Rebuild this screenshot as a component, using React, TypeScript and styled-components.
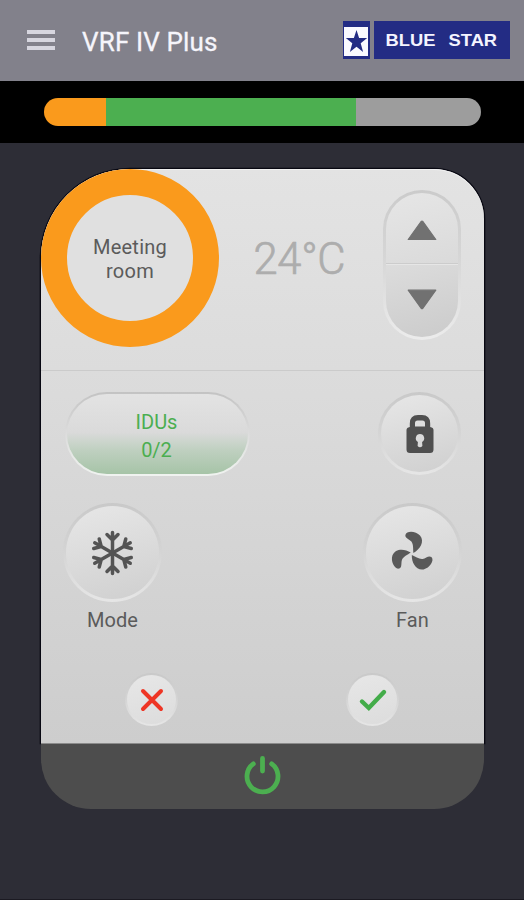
import React from "react";
import styled, { createGlobalStyle } from "styled-components";

const GlobalStyle = createGlobalStyle`
  * { box-sizing: border-box; }
  body { margin: 0; background: #2d2d36; font-family: Roboto, sans-serif; }
  button { font: inherit; color: inherit; border: 0; padding: 0; background: none; cursor: pointer; }
  svg { display: block; flex: none; overflow: visible; }
`;

const Screen = styled.main`
  width: 524px;
  height: 900px;
  overflow: hidden;
  background: #2d2d36;
  border-bottom: 1px solid #1b1a22;
`;

const Header = styled.header`
  height: 81px;
  display: flex;
  align-items: center;
  padding: 0 14.5px 0 27px;
  background: #82818b;
`;

const MenuButton = styled.button`
  width: 28px;
  height: 20px;
  display: flex;
  flex-direction: column;
  justify-content: space-between;
  margin-top: -1px;
`;

const MenuLine = styled.span`
  height: 3.6px;
  background: #d7d6df;
`;

const Title = styled.h1`
  margin: 2px auto 0 27px;
  font-size: 26px;
  line-height: 32px;
  font-weight: 400;
  letter-spacing: 0.15px;
  color: #f6f5fb;
  -webkit-text-stroke: 0.3px #f6f5fb;
`;

const Logo = styled.div`
  display: flex;
  gap: 4px;
  height: 37.5px;
  margin-top: -1.5px;
`;

const LogoMark = styled.div`
  width: 27px;
  padding: 6px 1.2px 2px;
  background: #232c84;
`;

const LogoField = styled.div`
  height: 29px;
  display: flex;
  align-items: center;
  justify-content: center;
  background: #fafaff;
`;

const LogoName = styled.div`
  width: 136px;
  display: flex;
  align-items: center;
  justify-content: center;
  gap: 18px;
  background: #232c84;
  color: #f4f4ff;
  font: bold 16.5px/37px "Liberation Sans", Arial, sans-serif;
  padding-top: 1.5px;
`;

const LogoWord = styled.span`
  transform: scaleX(1.11);
`;

const Strip = styled.div`
  height: 62px;
  padding: 16.5px 43.5px 0 44px;
  background: #000;
`;

const Meter = styled.div`
  height: 28px;
  display: flex;
  border-radius: 14px;
  overflow: hidden;
`;

const Segment = styled.div<{ $width: number; $color: string }>`
  flex: ${(p) => p.$width} 0 0;
  background: ${(p) => p.$color};
`;

const Remote = styled.section`
  width: 443px;
  margin: 26px 0 0 41px;
`;

const Panel = styled.div`
  height: 574px;
  border-radius: 89px 50px 0 0;
  background: linear-gradient(#e3e3e3 0%, #dcdcdc 35%, #cdcdcd 100%);
  box-shadow: 0 0 0 1.3px #080812, inset 0 1px 0 #f0f0f0;
`;

const RoomRow = styled.div`
  height: 202px;
  display: flex;
  align-items: flex-start;
  border-bottom: 1.5px solid #cbcbcb;
`;

const RoomDial = styled.div`
  width: 178px;
  height: 178px;
  display: flex;
  align-items: center;
  justify-content: center;
  padding-top: 2px;
  border: 26px solid #fa9a1c;
  border-radius: 50%;
  background: #e0e0e0;
  color: #5b5b5b;
  font-size: 20px;
  line-height: 24px;
  letter-spacing: 0.25px;
  text-align: center;
`;

const Temperature = styled.output`
  margin: 63px 0 0 34.5px;
  width: 94.5px;
  font-size: 43.5px;
  font-weight: 300;
  line-height: 56px;
  letter-spacing: -0.3px;
  -webkit-text-stroke: 0.7px #adadad;
  color: #adadad;
  white-space: nowrap;
`;

const Stepper = styled.div`
  width: 78px;
  height: 150px;
  margin: 21px 0 0 35px;
  padding: 3px;
  display: flex;
  flex-direction: column;
  border-radius: 39px;
  background: linear-gradient(#cbcbcb, #d6d6d6 45%, #ececec);
`;

const Step = styled.button<{ $down?: boolean }>`
  height: ${(p) => (p.$down ? 73 : 71)}px;
  display: flex;
  justify-content: center;
  align-items: flex-start;
  padding-top: ${(p) => (p.$down ? 24 : 27)}px;
  border-radius: ${(p) => (p.$down ? "0 0 36px 36px" : "36px 36px 0 0")};
  border-top: ${(p) => (p.$down ? "1px solid #e6e6e6" : "0")};
  border-bottom: ${(p) => (p.$down ? "0" : "1px solid #cccccc")};
  background: ${(p) =>
    p.$down
      ? "linear-gradient(165deg, #dcdcdc, #cbcbcb)"
      : "linear-gradient(165deg, #e6e6e6, #dadada)"};
`;

const ControlRow = styled.div<{ $top: number; $left: number; $right: number }>`
  display: flex;
  justify-content: space-between;
  padding: ${(p) => p.$top}px ${(p) => p.$right}px 0 ${(p) => p.$left}px;
`;

const Units = styled.button`
  width: 185px;
  height: 84px;
  border-radius: 42px;
  border: 2.5px solid transparent;
  background:
    linear-gradient(#e3e3e3, #dadada 48%, #bfd0c0 70%, #a6c4a7) padding-box,
    linear-gradient(#c3c3c3, #dadada 45%, #f0f3f0) border-box;
  color: #4bae50;
  font-size: 20px;
  line-height: 28px;
  padding-top: 3px;
  padding-right: 2px;
`;

const Round = styled.button<{ $size: number }>`
  width: ${(p) => p.$size}px;
  height: ${(p) => p.$size}px;
  display: flex;
  align-items: center;
  justify-content: center;
  border-radius: 50%;
  border: ${(p) => (p.$size > 60 ? 3 : 2)}px solid transparent;
  background:
    linear-gradient(165deg, #e7e7e7, ${(p) => (p.$size > 60 ? "#cfcfcf" : "#dcdcdc")}) padding-box,
    linear-gradient(#c9c9c9, #d3d3d3 45%, #e6e6e6) border-box;
`;

const Labelled = styled.div`
  display: flex;
  flex-direction: column;
  align-items: center;
`;

const Label = styled.span`
  margin-top: 6px;
  font-size: 20px;
  line-height: 24px;
  letter-spacing: 0.1px;
  color: #5b5b5b;
`;

const PowerBar = styled.button`
  width: 443px;
  height: 66px;
  display: flex;
  align-items: center;
  justify-content: center;
  padding-bottom: 1px;
  border-top: 1px solid #8b8b8b;
  border-radius: 0 0 50px 50px;
  background: #4d4d4d;
`;

const Arrow = ({ down = false }: { down?: boolean }) => (
  <svg width="30" height="21" viewBox="0 0 30 21">
    <path
      d={down ? "M1.2 1.2H28.8L15.9 19.2Q15 20 14.1 19.2Z" : "M1.2 19.5H28.8L15.9 1.5Q15 .7 14.1 1.5Z"}
      fill="#717171"
      stroke="#717171"
      strokeWidth="1.2"
      strokeLinejoin="round"
    />
  </svg>
);

const StarIcon = () => (
  <svg width="23" height="25" viewBox="0 0 23 25">
    <path
      d="M11.5 1L14.1 9.1H22.2L15.7 14.2L18.1 23L11.5 17.7L4.9 23L7.3 14.2L.8 9.1H8.9Z"
      fill="#232c84"
    />
  </svg>
);

const LockIcon = () => (
  <svg width="28" height="40" viewBox="0 0 28 40">
    <path
      fill="#4f4f4f"
      fillRule="evenodd"
      d="M3.8 13V9.5Q3.8 1 12 1H16Q24.2 1 24.2 9.5V13Q27.5 13.5 27.5 16V35.5Q27.5 39 24 39H4Q.5 39 .5 35.5V16Q.5 13.5 3.8 13ZM9 12.5H19V9Q19 6.5 16.5 6.5H11.5Q9 6.5 9 9ZM14 20A4.3 4.3 0 0 0 11.9 28L11.6 32Q14 34.5 16.4 32L16.1 28A4.3 4.3 0 0 0 14 20Z"
    />
  </svg>
);

const SnowIcon = () => (
  <svg width="46" height="46" viewBox="-22.5 -23 46 46" fill="none" stroke="#545454" strokeWidth="3.5" strokeLinecap="round">
    {[0, 60, 120, 180, 240, 300].map((a) => (
      <path key={a} transform={`rotate(${a})`} d="M0 0V-20.5M-5.5 -18.5L0 -13L5.5 -18.5" />
    ))}
  </svg>
);

const FanIcon = () => (
  <svg width="46" height="46" viewBox="-22 -23.5 46 46" fill="#595959">
    {[0, 120, 240].map((a) => (
      <path
        key={a}
        transform={`rotate(${a})`}
        d="M1.4 -0.6C8 -4 13 -12 8 -18C4 -22.6 -5.5 -23.2 -6.6 -18.6C-7.2 -15.4 -2.8 -14.4 -0.6 -12C1.6 -9.2 1 -4.5 1.4 -0.6Z"
      />
    ))}
  </svg>
);

const CrossIcon = () => (
  <svg width="24" height="24" viewBox="0 0 24 24">
    <path d="M3 3L21 21M21 3L3 21" stroke="#ee3524" strokeWidth="4" strokeLinecap="round" />
  </svg>
);

const CheckIcon = () => (
  <svg width="28" height="22" viewBox="0 0 28 22">
    <path d="M3 12.5L9.8 19L25 3" fill="none" stroke="#43ac49" strokeWidth="4.4" strokeLinecap="round" />
  </svg>
);

const PowerIcon = () => (
  <svg width="38" height="40" viewBox="-18.5 -19.5 38 40" fill="none" stroke="#4caf50" strokeWidth="4.8" strokeLinecap="round">
    <path d="M-9.2 -11.6A15.5 15.5 0 1 0 9.2 -11.6M0 -17V-4.5" />
  </svg>
);

export default function App() {
  return (
    <Screen>
      <GlobalStyle />
      <Header>
        <MenuButton aria-label="Menu">
          <MenuLine />
          <MenuLine />
          <MenuLine />
        </MenuButton>
        <Title>VRF IV Plus</Title>
        <Logo>
          <LogoMark>
            <LogoField>
              <StarIcon />
            </LogoField>
          </LogoMark>
          <LogoName>
            <LogoWord>BLUE</LogoWord>
            <LogoWord>STAR</LogoWord>
          </LogoName>
        </Logo>
      </Header>
      <Strip>
        <Meter>
          <Segment $width={62} $color="#fa9a1c" />
          <Segment $width={249.5} $color="#4caf50" />
          <Segment $width={125} $color="#9d9d9d" />
        </Meter>
      </Strip>
      <Remote>
        <Panel>
          <RoomRow>
            <RoomDial>
              Meeting
              <br />
              room
            </RoomDial>
            <Temperature>24°C</Temperature>
            <Stepper>
              <Step aria-label="Warmer">
                <Arrow />
              </Step>
              <Step $down aria-label="Cooler">
                <Arrow down />
              </Step>
            </Stepper>
          </RoomRow>
          <ControlRow $top={21} $left={24} $right={23}>
            <Units>
              IDUs
              <br />
              0/2
            </Units>
            <Round $size={83} aria-label="Lock">
              <LockIcon />
            </Round>
          </ControlRow>
          <ControlRow $top={27} $left={22} $right={22}>
            <Labelled>
              <Round $size={99}>
                <SnowIcon />
              </Round>
              <Label>Mode</Label>
            </Labelled>
            <Labelled>
              <Round $size={99}>
                <FanIcon />
              </Round>
              <Label>Fan</Label>
            </Labelled>
          </ControlRow>
          <ControlRow $top={41} $left={84} $right={85}>
            <Round $size={53} aria-label="Cancel">
              <CrossIcon />
            </Round>
            <Round $size={53} aria-label="Confirm">
              <CheckIcon />
            </Round>
          </ControlRow>
        </Panel>
        <PowerBar aria-label="Power">
          <PowerIcon />
        </PowerBar>
      </Remote>
    </Screen>
  );
}
